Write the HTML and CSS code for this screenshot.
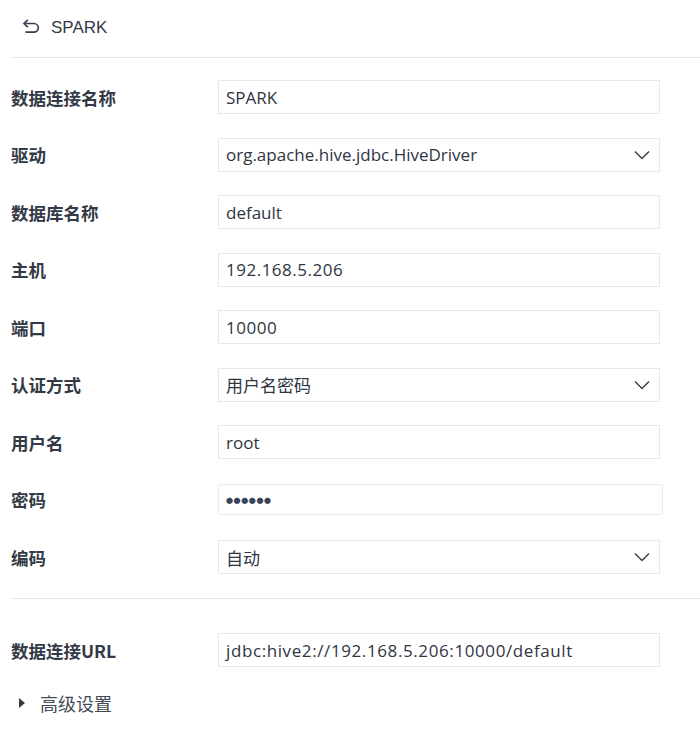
FILE: index.html
```html
<!DOCTYPE html>
<html lang="zh">
<head>
<meta charset="utf-8">
<link rel="stylesheet" href="styles.css">
</head>
<body>
<div class="page">
  <div class="header">
    <svg class="back" width="20" height="16" viewBox="0 0 20 16"><path d="M3 4.5h10a4.3 4.3 0 0 1 0 8.6H4.5" fill="none" stroke="#3a4150" stroke-width="1.7"/><path d="M6.8 0.8L3 4.5L6.8 8.2" fill="none" stroke="#3a4150" stroke-width="1.7"/></svg>
    <span class="title">SPARK</span>
  </div>
  <div class="form">
    <div class="row"><div class="label">数据连接名称</div><div class="field">SPARK</div></div>
    <div class="row"><div class="label">驱动</div><div class="field select">org.apache.hive.jdbc.HiveDriver<svg class="chev" width="16" height="10" viewBox="0 0 16 10"><path d="M1 1.5l7 7 7-7" fill="none" stroke="#3a4150" stroke-width="1.5"/></svg></div></div>
    <div class="row"><div class="label">数据库名称</div><div class="field">default</div></div>
    <div class="row"><div class="label">主机</div><div class="field num">192.168.5.206</div></div>
    <div class="row"><div class="label">端口</div><div class="field num">10000</div></div>
    <div class="row"><div class="label">认证方式</div><div class="field select">用户名密码<svg class="chev" width="16" height="10" viewBox="0 0 16 10"><path d="M1 1.5l7 7 7-7" fill="none" stroke="#3a4150" stroke-width="1.5"/></svg></div></div>
    <div class="row"><div class="label">用户名</div><div class="field">root</div></div>
    <div class="row"><div class="label">密码</div><div class="field pwd"><span class="dots">●●●●●●</span></div></div>
    <div class="row"><div class="label">编码</div><div class="field select">自动<svg class="chev" width="16" height="10" viewBox="0 0 16 10"><path d="M1 1.5l7 7 7-7" fill="none" stroke="#3a4150" stroke-width="1.5"/></svg></div></div>
  </div>
  <div class="divider"></div>
  <div class="form form2">
    <div class="row"><div class="label">数据连接URL</div><div class="field url">jdbc:hive2://192.168.5.206:10000/default</div></div>
  </div>
  <div class="advanced">
    <span class="tri"></span>
    <span class="adv-text">高级设置</span>
  </div>
</div>
</body>
</html>
```

FILE: styles.css
```css
html, body {
  margin: 0;
  padding: 0;
  background: #ffffff;
}
.page {
  width: 700px;
  font-family: "Open Sans", "Noto Sans", "Noto Sans CJK SC", sans-serif;
  color: #333a46;
}
.header {
  margin-left: 11px;
  height: 58px;
  border-bottom: 1px solid #e4e7ea;
  display: flex;
  align-items: center;
  padding-left: 10px;
  box-sizing: border-box;
  gap: 10px;
}
.back {
  display: block;
  margin-top: -3px;
}
.title {
  font-family: "Liberation Sans", Arial, sans-serif;
  font-size: 17px;
  color: #333a46;
  margin-top: -2px;
}
.form {
  padding: 22px 0 0 11px;
  display: flex;
  flex-direction: column;
  gap: 23.5px;
}
.row {
  display: flex;
  align-items: center;
  height: 34px;
}
.label {
  width: 207px;
  font-family: "Noto Sans CJK SC", "Noto Sans", sans-serif;
  font-weight: bold;
  font-size: 17.5px;
  color: #333a46;
}
.field {
  width: 442px;
  height: 34px;
  box-sizing: border-box;
  border: 1px solid #e6e8ea;
  display: flex;
  align-items: center;
  justify-content: space-between;
  padding: 0 8px 0 7px;
  font-size: 17px;
  font-family: "Open Sans", "Noto Sans CJK SC", sans-serif;
  color: #2f3542;
}
.field.num {
  letter-spacing: 0.5px;
}
.field.url {
  letter-spacing: 0.6px;
}
.field.pwd {
  width: 445px;
  height: 31px;
  border: 1.5px solid #ebebeb;
  border-radius: 3px;
}
.dots {
  font-size: 7px;
  letter-spacing: 0.6px;
  color: #3a4458;
}
.chev {
  display: block;
  margin-right: 1px;
}
.divider {
  margin: 24px 0 0 11px;
  border-top: 1px solid #e4e7ea;
}
.form2 {
  padding-top: 34px;
}
.advanced {
  display: flex;
  align-items: center;
  margin: 23px 0 0 19px;
  gap: 15px;
}
.tri {
  width: 0;
  height: 0;
  border-top: 5px solid transparent;
  border-bottom: 5px solid transparent;
  border-left: 6px solid #333a46;
}
.adv-text {
  font-family: "Noto Sans CJK SC", sans-serif;
  font-size: 18px;
  color: #444a55;
}
```
